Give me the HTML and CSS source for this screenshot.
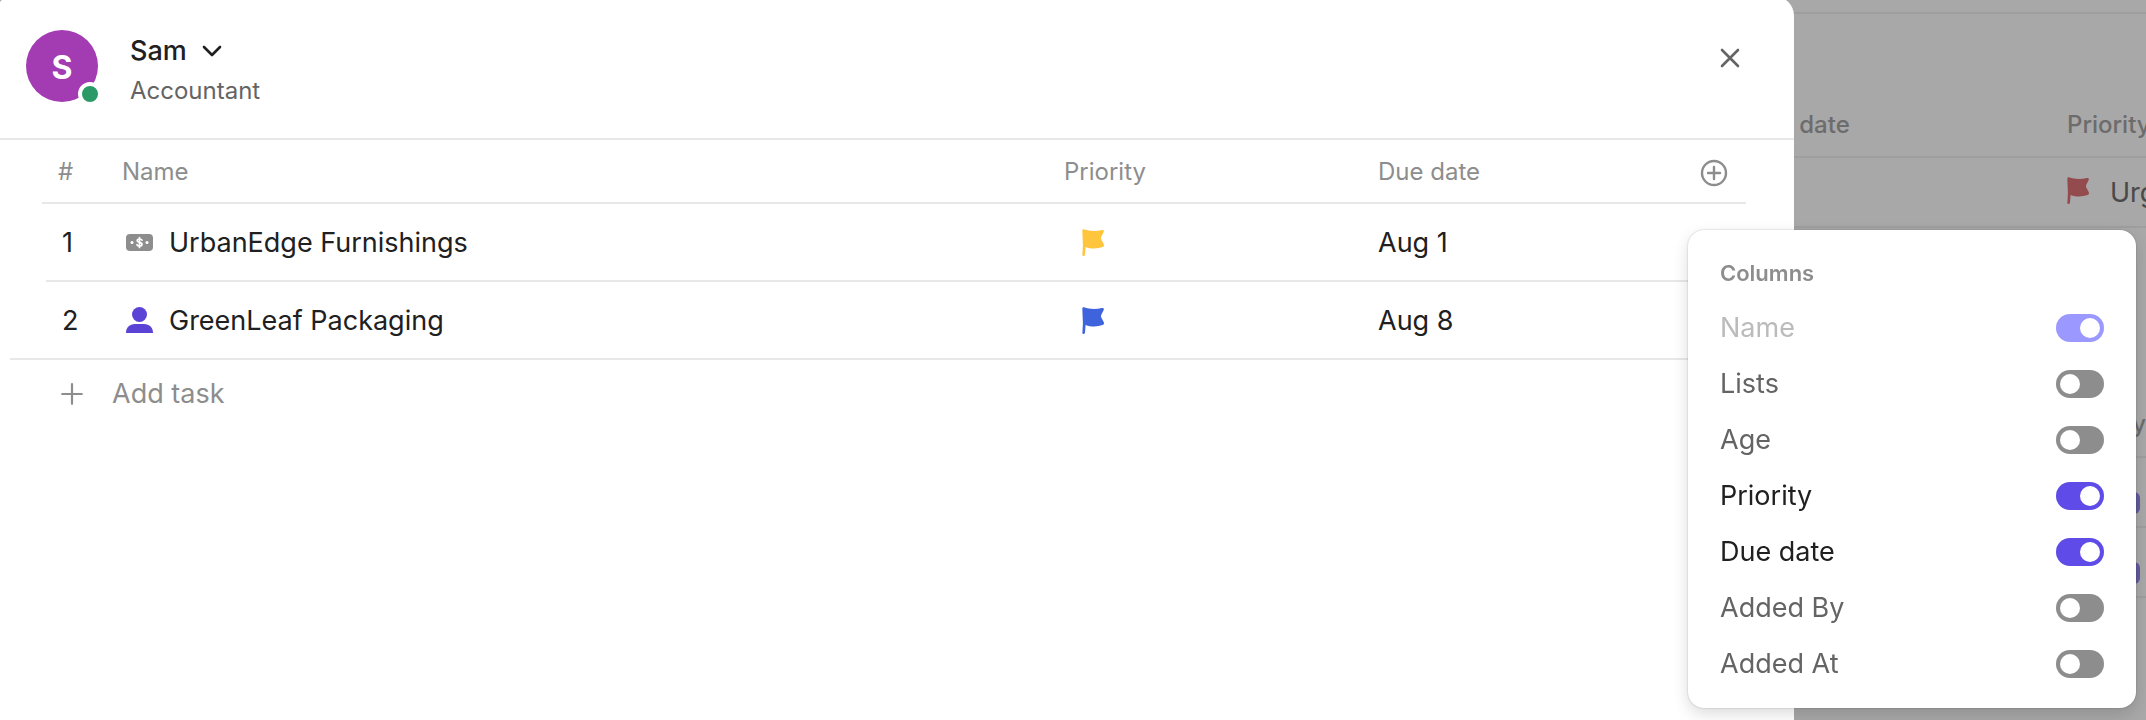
FILE: index.html
```html
<!DOCTYPE html>
<html lang="en">
<head>
  <meta charset="UTF-8">
  <meta name="viewport" content="width=device-width, initial-scale=1.0">
  <title>Sam - Tasks</title>
  <link rel="stylesheet" href="styles.css">
</head>
<body>
  <!-- Shared icon shapes -->
  <svg class="icon-defs" aria-hidden="true">
    <symbol id="icon-flag" viewBox="0 0 22 27">
      <path d="M0.300 1.800C0.300 0.300 1.200 -0.100 2 0.300C7.500 2.400 14 2.400 19.800 1.100C21.600 0.700 22.200 1.800 21.600 3.200L19.300 7.800C18.900 8.700 18.900 9.600 19.300 10.500L21.800 15.300C22.300 16.500 21.800 17.600 20.600 18C15.300 19.900 9 19.900 3.600 17.900L3 25.500C2.900 26.400 2.300 27 1.500 27C0.700 27 0.300 26.400 0.400 25.500L0.900 16Z" fill="currentColor"/>
    </symbol>
  </svg>

  <!-- Page behind the panel -->
  <main class="page">
    <div class="page-top"></div>
    <div class="page-list">
      <div class="page-row page-head">
        <span>Due date</span>
        <span>Priority</span>
      </div>
      <div class="page-row">
        <span></span>
        <span class="page-priority">
          <svg class="flag flag-urgent"><use href="#icon-flag"/></svg>
          Urgent
        </span>
      </div>
    </div>
    <div class="page-group">
      <div class="group-row group-head">Priority</div>
      <div class="group-row"><span class="tag"></span></div>
      <div class="group-row"><span class="tag"></span></div>
    </div>
  </main>
  <div class="overlay"></div>

  <!-- Member panel -->
  <section class="panel">
    <header class="panel-header">
      <div class="avatar">S<span class="status"></span></div>
      <div class="member">
        <button class="member-name">
          Sam
          <svg width="20" height="12" viewBox="0 0 20 12" fill="none" stroke="currentColor" stroke-width="2.600" stroke-linecap="round" stroke-linejoin="round"><path d="M2 2l8 8 8-8"/></svg>
        </button>
        <p class="member-role">Accountant</p>
      </div>
      <button class="close" aria-label="Close">
        <svg width="20" height="20" viewBox="0 0 20 20" fill="none" stroke="currentColor" stroke-width="2.600" stroke-linecap="round"><path d="M2 2l16 16M18 2L2 18"/></svg>
      </button>
    </header>

    <table class="tasks">
      <thead>
        <tr>
          <th class="col-number">#</th>
          <th class="col-name">Name</th>
          <th class="col-priority">Priority</th>
          <th class="col-date">Due date</th>
          <th class="col-add">
            <button class="add-column" aria-label="Add column">
              <svg width="28" height="28" viewBox="0 0 28 28" fill="none" stroke="currentColor" stroke-width="2.400" stroke-linecap="round"><circle cx="14" cy="14" r="12"/><path d="M14 8v12M8 14h12"/></svg>
            </button>
          </th>
        </tr>
      </thead>
      <tbody>
        <tr class="row-first">
          <td class="col-number">1</td>
          <td class="col-name">
            <div class="task-name">
              <svg width="27" height="28" viewBox="0 0 27 28">
                <rect x="0" y="5" width="27" height="17" rx="4" fill="#8d8d8d"/>
                <path d="M16 11.200C15.500 10.300 14.600 10 13.500 10C12 10 11.200 10.700 11.200 11.700C11.200 14.200 16 12.700 16 15.300C16 16.400 15 17.100 13.500 17.100C12.200 17.100 11.300 16.600 10.900 15.700M13.500 8.600V18.400" fill="none" stroke="#fff" stroke-width="1.700" stroke-linecap="round"/>
                <circle cx="6" cy="13.500" r="1.500" fill="#fff"/>
                <circle cx="21" cy="13.500" r="1.500" fill="#fff"/>
              </svg>
              UrbanEdge Furnishings
            </div>
          </td>
          <td class="col-priority"><svg class="flag flag-high"><use href="#icon-flag"/></svg></td>
          <td class="col-date">Aug 1</td>
          <td class="col-add"></td>
        </tr>
        <tr>
          <td class="col-number">2</td>
          <td class="col-name">
            <div class="task-name">
              <svg width="27" height="28" viewBox="0 0 27 28" fill="#5b43d6">
                <circle cx="13.500" cy="7.500" r="7.500"/>
                <path d="M0 26C0 20.500 3.500 17 9 17H18C23.500 17 27 20.500 27 26Z"/>
              </svg>
              GreenLeaf Packaging
            </div>
          </td>
          <td class="col-priority"><svg class="flag flag-normal"><use href="#icon-flag"/></svg></td>
          <td class="col-date">Aug 8</td>
          <td class="col-add"></td>
        </tr>
      </tbody>
    </table>

    <button class="add-task">
      <svg width="22" height="22" viewBox="0 0 22 22" fill="none" stroke="currentColor" stroke-width="2.200" stroke-linecap="round"><path d="M11 1.200v19.600M1.200 11h19.600"/></svg>
      Add task
    </button>
  </section>

  <!-- Columns menu -->
  <div class="menu">
    <h2>Columns</h2>
    <label class="option">Name <input type="checkbox" checked disabled></label>
    <label class="option">Lists <input type="checkbox"></label>
    <label class="option">Age <input type="checkbox"></label>
    <label class="option">Priority <input type="checkbox" checked></label>
    <label class="option">Due date <input type="checkbox" checked></label>
    <label class="option">Added By <input type="checkbox"></label>
    <label class="option">Added At <input type="checkbox"></label>
  </div>
</body>
</html>
```
FILE: styles.css
```css
* {
  box-sizing: border-box;
}

body {
  margin: 0;
  min-height: 100vh;
  overflow: hidden;
  font-family: Inter, "Liberation Sans", sans-serif;
  font-size: 27px;
  line-height: 32px;
  color: #202020;
  background-color: #fff;
}

button {
  padding: 0;
  border: none;
  background: none;
  font: inherit;
  color: inherit;
  cursor: pointer;
}

svg {
  display: block;
  flex-shrink: 0;
}

.icon-defs {
  position: absolute;
  width: 0;
  height: 0;
}

.flag {
  width: 22px;
  height: 27px;
}

.flag-urgent {
  color: #e07377;
}

.flag-high {
  color: #ffc53d;
}

.flag-normal {
  color: #3e63dd;
}

/* Page behind the panel */
.page {
  color: #707070;
}

.page-top {
  height: 14px;
  border-bottom: 2px solid #f0f0f0;
}

.page-list {
  padding-top: 76px;
}

.page-row {
  display: grid;
  grid-template-columns: 320px 79px;
  justify-content: end;
  align-items: center;
  height: 70px;
  padding-top: 2px;
  border-bottom: 2px solid #f0f0f0;
  white-space: nowrap;
}

.page-head {
  height: 68px;
  padding-top: 4px;
  color: #a5a5a5;
  font-size: 24px;
  font-weight: 500;
}

.page-priority {
  display: flex;
  gap: 21px;
}

.page-group {
  padding-top: 160px;
}

.group-row {
  display: flex;
  align-items: flex-end;
  justify-content: flex-end;
  height: 70px;
  padding: 0 6px 12px;
  border-bottom: 2px solid #f0f0f0;
}

.group-head {
  padding: 0 0 16px;
  color: #a5a5a5;
  font-size: 24px;
  font-weight: 500;
}

.tag {
  width: 60px;
  height: 22px;
  border-radius: 6px;
  background-color: #958aee;
}

.overlay {
  position: fixed;
  inset: 0;
  background-color: rgba(0, 0, 0, 0.34);
}

/* Member panel */
.panel {
  position: fixed;
  top: -4px;
  right: 352px;
  bottom: 0;
  left: -6px;
  border-radius: 20px 20px 0 0;
  background-color: #fff;
}

.panel-header {
  display: flex;
  align-items: flex-start;
  height: 144px;
  padding: 34px 54px 0 32px;
  border-bottom: 2px solid #e8e8e8;
}

.avatar {
  position: relative;
  width: 72px;
  height: 72px;
  padding-top: 2px;
  border-radius: 50%;
  background-color: #a33bb2;
  color: #fff;
  font-size: 32px;
  font-weight: 700;
  line-height: 72px;
  text-align: center;
}

.status {
  position: absolute;
  right: -4px;
  bottom: -4px;
  width: 24px;
  height: 24px;
  border: 4px solid #fff;
  border-radius: 50%;
  background-color: #2b9a66;
}

.member {
  flex: 1;
  margin-left: 32px;
  padding-top: 5px;
}

.member-name {
  display: flex;
  align-items: center;
  gap: 15px;
  font-weight: 500;
}

.member-role {
  margin: 8px 0 0;
  color: #646464;
  font-size: 24px;
}

.close {
  margin-top: 18px;
  color: #646464;
}

.tasks {
  width: calc(100% - 64px);
  margin-left: 16px;
  border-collapse: collapse;
  table-layout: fixed;
}

/* Row lines start further in on the upper rows */
.tasks tr {
  height: 78px;
  background: linear-gradient(#e8e8e8, #e8e8e8) right bottom / 100% 2px no-repeat;
}

.tasks thead tr {
  height: 64px;
  background-size: calc(100% - 32px) 2px;
}

.tasks .row-first {
  background-size: calc(100% - 36px) 2px;
}

.tasks th,
.tasks td {
  padding: 0;
  text-align: left;
  font-weight: 400;
}

.tasks th {
  color: #8d8d8d;
  font-size: 24px;
}

.tasks .col-number {
  width: 112px;
  padding-left: 52px;
}

.tasks th.col-number {
  padding-left: 48px;
}

.tasks td.col-name {
  padding-left: 4px;
}

.tasks .col-priority {
  width: 314px;
}

.tasks td.col-priority {
  padding: 0 0 2px 18px;
}

.tasks .col-date {
  width: 322px;
}

.tasks .col-add {
  width: 46px;
}

.tasks th.col-add {
  padding-top: 2px;
}

.task-name {
  display: flex;
  align-items: center;
  gap: 16px;
}

.add-column {
  display: block;
}

.add-task {
  display: flex;
  align-items: center;
  gap: 29px;
  margin: 18px 0 0 67px;
  color: #8d8d8d;
}

/* Columns menu */
.menu {
  position: fixed;
  top: 230px;
  right: 10px;
  width: 448px;
  padding: 27px 32px 16px;
  border-radius: 16px;
  background-color: #fff;
  box-shadow: 0 0 2px rgba(0, 0, 0, 0.25), 0 6px 16px rgba(0, 0, 0, 0.14);
}

.menu h2 {
  margin: 0 0 11px;
  color: #8d8d8d;
  font-size: 22px;
  font-weight: 600;
}

.option {
  display: flex;
  align-items: center;
  justify-content: space-between;
  height: 56px;
  color: #646464;
}

.option:has(input:checked) {
  color: #202020;
}

.option:has(input:disabled) {
  color: #bbb;
}

.option input {
  appearance: none;
  width: 48px;
  height: 28px;
  margin: 0;
  padding: 4px;
  border-radius: 14px;
  background-color: #8d8d8d;
}

.option input::before {
  content: "";
  display: block;
  width: 20px;
  height: 20px;
  border-radius: 50%;
  background-color: #fff;
}

.option input:checked {
  padding-left: 24px;
  background-color: #5f4be8;
}

.option input:disabled {
  background-color: #9b98ff;
}
```
